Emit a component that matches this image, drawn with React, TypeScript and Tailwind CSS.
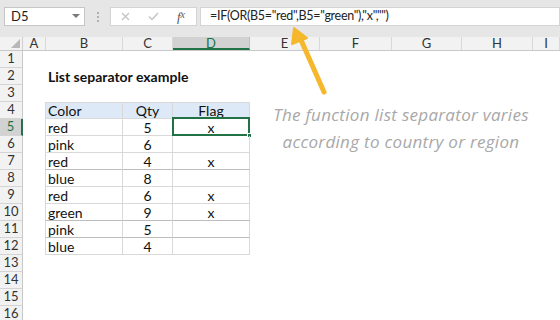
const cols = [
  { key: "A", w: "w-[23px]" },
  { key: "B", w: "w-[77px]" },
  { key: "C", w: "w-[50px]" },
  { key: "D", w: "w-[77px]" },
  { key: "E", w: "w-[70px]" },
  { key: "F", w: "w-[72px]" },
  { key: "G", w: "w-[70px]" },
  { key: "H", w: "w-[71px]" },
  { key: "I", w: "w-[27px]" },
];

const data = [
  ["red", "5", "x"],
  ["pink", "6", ""],
  ["red", "4", "x"],
  ["blue", "8", ""],
  ["red", "6", "x"],
  ["green", "9", "x"],
  ["pink", "5", ""],
  ["blue", "4", ""],
];

// rows whose bottom line is drawn a bit darker in the sheet
const darkBottom = [7, 10, 11];

function TopBar() {
  return (
    <div className="h-[37px] bg-[#e6e6e6] flex items-start pt-[7px] pl-[4px]">
      <div className="w-[81px] h-[19px] bg-white border border-[#c6c6c6] flex items-center justify-between pl-[6px] pr-[4px] text-[13px] text-[#222]">
        <span>D5</span>
        <svg width="8" height="5" viewBox="0 0 8 5">
          <path d="M0 0 L8 0 L4 4 Z" fill="#7a7a7a" />
        </svg>
      </div>
      <div className="w-[25px] h-[19px] flex flex-col items-center justify-center gap-[2px]">
        <span className="w-[2px] h-[2px] bg-[#b0b0b0]" />
        <span className="w-[2px] h-[2px] bg-[#b0b0b0]" />
        <span className="w-[2px] h-[2px] bg-[#b0b0b0]" />
      </div>
      <div className="w-[87px] h-[19px] bg-white border border-[#d4d4d4] flex items-center">
        <div className="w-[28px] flex justify-center">
          <svg width="9" height="9" viewBox="0 0 9 9">
            <path d="M1 1 L8 8 M8 1 L1 8" stroke="#c4c4c4" strokeWidth="1.3" />
          </svg>
        </div>
        <div className="w-[28px] flex justify-center">
          <svg width="11" height="9" viewBox="0 0 11 9">
            <path d="M1 4.5 L4 7.5 L10 1" stroke="#c4c4c4" strokeWidth="1.5" fill="none" />
          </svg>
        </div>
        <div className="w-[28px] flex justify-center font-['Liberation_Serif',serif] italic text-[13px] text-[#555] leading-none">
          f<span className="text-[10px]">x</span>
        </div>
      </div>
      <div className="ml-[3px] flex-1 h-[19px] bg-white border border-[#d4d4d4] flex items-center pl-[9px] text-[12.5px] tracking-[-0.3px] text-[#222] whitespace-nowrap">
        =IF(OR(B5="red",B5="green"),"x","")
      </div>
    </div>
  );
}

function ColumnHeaders() {
  return (
    <div className="flex h-[14px] bg-[#f2f2f2] border-b border-[#c8c8c8] text-[13px] leading-[13px] text-[#333]">
      <div className="w-[23px] h-full flex items-end justify-end pr-[2px] pb-[2px] border-r border-[#d0d0d0]">
        <svg width="9" height="9" viewBox="0 0 9 9">
          <path d="M9 0 L9 9 L0 9 Z" fill="#b8b8b8" />
        </svg>
      </div>
      {cols.map((c) =>
        c.key === "D" ? (
          <div
            key={c.key}
            className={`${c.w} h-full flex justify-center bg-[#d2d2d2] border-r border-[#c0c0c0] border-b-2 border-b-[#217346] text-[#217346] -mb-px`}
          >
            {c.key}
          </div>
        ) : (
          <div key={c.key} className={`${c.w} h-full flex justify-center border-r border-[#d8d8d8]`}>
            {c.key}
          </div>
        )
      )}
    </div>
  );
}

function Cell({
  w,
  children,
  align = "left",
  extra = "",
}: {
  w: string;
  children?: React.ReactNode;
  align?: "left" | "center";
  extra?: string;
}) {
  return (
    <div
      className={`${w} h-full flex items-center ${align === "center" ? "justify-center" : "pl-[2px]"} ${extra}`}
    >
      {children}
    </div>
  );
}

function Row({ n }: { n: number }) {
  const selected = n === 5;
  const inTable = n >= 4 && n <= 12;
  const isHead = n === 4;
  const rec = inTable && !isHead ? data[n - 5] : null;
  const bottom = darkBottom.includes(n) ? "border-b border-[#bdbdbd]" : "border-b border-[#d9d9d9]";
  const tb = inTable
    ? `${bottom} border-r border-r-[#d9d9d9] ${isHead ? "border-t border-t-[#d9d9d9] bg-[#dde9f6]" : ""}`
    : "";

  return (
    <div className="flex h-[17px] text-[14px] text-[#111]">
      <div
        className={`w-[23px] h-full flex items-center justify-center text-[13px] border-b border-[#d4d4d4] ${
          selected
            ? "bg-[#d2d2d2] text-[#217346] border-r-2 border-r-[#217346]"
            : "bg-[#f2f2f2] text-[#333] border-r border-r-[#c8c8c8]"
        }`}
      >
        {n}
      </div>
      <Cell w="w-[23px]" />
      {n === 2 ? (
        <div className="w-[77px] h-full flex items-center pl-[2px] font-bold whitespace-nowrap overflow-visible">
          List separator example
        </div>
      ) : (
        <Cell w="w-[77px]" extra={inTable ? `${tb} border-l border-l-[#d9d9d9] -ml-px w-[78px]` : ""}>
          {isHead ? "Color" : rec?.[0]}
        </Cell>
      )}
      <Cell w="w-[50px]" align="center" extra={tb}>
        {isHead ? "Qty" : rec?.[1]}
      </Cell>
      <div className={`w-[77px] h-full flex items-center justify-center relative ${tb}`}>
        {isHead ? "Flag" : rec?.[2]}
        {selected && (
          <>
            <div className="absolute -top-[2px] -left-[1px] w-[78px] h-[19px] border-2 border-[#217346]" />
            <div className="absolute -bottom-[3px] -right-[3px] w-[5px] h-[5px] bg-[#217346] border border-white" />
          </>
        )}
      </div>
    </div>
  );
}

export default function App() {
  const rows = Array.from({ length: 16 }, (_, i) => i + 1);
  return (
    <div className="w-[560px] h-[320px] overflow-hidden relative bg-white font-['Lato',sans-serif]">
      <TopBar />
      <ColumnHeaders />
      <div>
        {rows.map((n) => (
          <Row key={n} n={n} />
        ))}
      </div>

      <svg className="absolute left-0 top-0" width="560" height="320" viewBox="0 0 560 320">
        <path d="M324 92 L301 40" stroke="#f5b72b" strokeWidth="5" strokeLinecap="round" />
        <path d="M294 28 L292 44 L307 38 Z" fill="#f5b72b" stroke="#f5b72b" strokeWidth="2" strokeLinejoin="round" />
      </svg>

      <div className="absolute left-[266px] top-[101px] w-[270px] text-center text-[17px] leading-[27px] italic tracking-[0.3px] text-[#a8a8a8] font-['Open_Sans',sans-serif]">
        <div>The function list separator varies</div>
        <div>according to country or region</div>
      </div>
    </div>
  );
}
